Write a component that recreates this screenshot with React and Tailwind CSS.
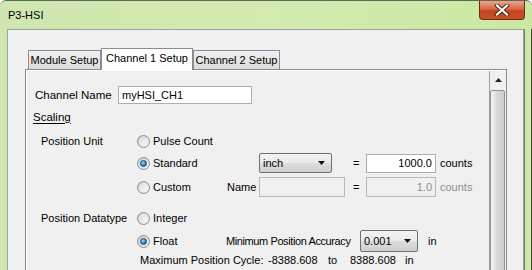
export default function App() {
  return (
    <div className="flex h-[270px] w-[532px] flex-col overflow-hidden rounded-t-[6px] border-t border-[#5b6b52] bg-gradient-to-r from-[#cfe6b0] via-[#d3ebb2] to-[#cbe8a2] font-['Liberation_Sans',sans-serif] text-[11px] leading-[13px] text-black">
      <div className="flex h-[28px] shrink-0 items-start">
        <span className="pl-[8px] pt-[8px] text-[11px]">P3-HSI</span>
        <CloseButton />
      </div>

      <div className="flex min-h-0 flex-1">
        <div className="w-[7px] shrink-0" />
        <div className="flex-1 border-l border-r border-t border-[#9aa596] bg-[#f0f0f0] pl-[17px] pt-[18px]">
          <div className="flex h-[21px] items-end pl-[3px]">
            <Tab label="Module Setup" className="w-[73px]" />
            <div className="relative z-10 -mb-px flex h-[22px] w-[92px] items-center justify-center border-l border-r border-t border-[#898c95] bg-white pb-[2px]">
              Channel 1 Setup
            </div>
            <Tab label="Channel 2 Setup" className="w-[87px]" />
          </div>

          <div className="h-[220px] w-[482px] border border-[#898c95]">
            <div className="flex h-full border-l border-t border-white">
              <div className="flex-1 whitespace-nowrap pl-[8px] pt-[15px]">
                <div className="flex h-[18px] items-center">
                  <span className="w-[83px] text-[11.5px]">Channel Name</span>
                  <div className="flex h-[18px] w-[134px] items-center border border-[#abadb3] bg-white pl-[3px]">
                    myHSI_CH1
                  </div>
                </div>

                <div className="-ml-[2px] mt-[6px] flex h-[14px] items-center">
                  <span className="text-[11.5px] underline underline-offset-2">Scaling</span>
                </div>

                <div className="mt-[7px] flex h-[20px] items-center">
                  <span className="ml-[6px] w-[96px]">Position Unit</span>
                  <RadioLabel label="Pulse Count" />
                </div>

                <div className="mt-[2px] flex h-[20px] items-center">
                  <span className="ml-[6px] w-[96px]" />
                  <RadioLabel label="Standard" on className="w-[122px]" />
                  <Combo value="inch" className="h-[20px] w-[73px]" />
                  <span className="ml-[21px] w-[13px]">=</span>
                  <div className="flex h-[19px] w-[70px] items-center justify-end border border-[#abadb3] bg-white pr-[3px]">
                    1000.0
                  </div>
                  <span className="ml-[4px]">counts</span>
                </div>

                <div className="mt-[4px] flex h-[20px] items-center">
                  <span className="ml-[6px] w-[96px]" />
                  <RadioLabel label="Custom" className="w-[90px]" />
                  <span className="w-[32px]">Name</span>
                  <div className="h-[20px] w-[86px] border border-[#b5b8bd] bg-[#f0f0f0]" />
                  <span className="ml-[8px] w-[13px]">=</span>
                  <div className="flex h-[20px] w-[70px] items-center justify-end border border-[#b5b8bd] bg-[#f0f0f0] pr-[3px] text-[#8d8d8d]">
                    1.0
                  </div>
                  <span className="ml-[4px] text-[#8d8d8d]">counts</span>
                </div>

                <div className="mt-[11px] flex h-[20px] items-center">
                  <span className="ml-[6px] w-[96px]">Position Datatype</span>
                  <RadioLabel label="Integer" />
                </div>

                <div className="mt-[2px] flex h-[22px] items-center">
                  <span className="ml-[6px] w-[96px]" />
                  <RadioLabel label="Float" on className="w-[89px]" />
                  <span className="w-[134px] tracking-[-0.4px]">Minimum Position Accuracy</span>
                  <Combo value="0.001" className="h-[22px] w-[58px]" />
                  <span className="ml-[10px]">in</span>
                </div>

                <div className="flex h-[16px] items-center">
                  <span className="ml-[105px] w-[128px]">Maximum Position Cycle:</span>
                  <span className="w-[60px]">-8388.608</span>
                  <span className="w-[22px]">to</span>
                  <span className="w-[55px]">8388.608</span>
                  <span>in</span>
                </div>
              </div>

              <ScrollBar />
            </div>
          </div>
        </div>
        <div className="w-[8px] shrink-0 border-l border-[#6f7f60] border-r border-r-[#3f4a36] bg-gradient-to-r from-[#c9e6a0] to-[#d2ecb0]" />
      </div>
    </div>
  );
}

function Tab({ label, className = "" }) {
  return (
    <div
      className={`flex h-[19px] items-center justify-center border-l border-r border-t border-[#898c95] bg-gradient-to-b from-[#f0f0f0] to-[#dcdcdc] ${className}`}
    >
      {label}
    </div>
  );
}

function Radio({ on }) {
  return (
    <span className="flex h-[13px] w-[13px] shrink-0 items-center justify-center rounded-full border border-[#8e8f8f] bg-gradient-to-br from-[#c9c9c9] to-[#f6f6f6]">
      {on ? (
        <span className="h-[7px] w-[7px] rounded-full border border-[#1b4f7d] bg-[radial-gradient(circle_at_40%_35%,#9fdcff,#2a86cc_55%,#0d4a85)]" />
      ) : (
        <span className="h-[9px] w-[9px] rounded-full bg-gradient-to-br from-[#dcdcdc] to-[#fafafa]" />
      )}
    </span>
  );
}

function RadioLabel({ label, on = false, className = "" }) {
  return (
    <div className={`flex shrink-0 items-center gap-[3px] ${className}`}>
      <Radio on={on} />
      <span>{label}</span>
    </div>
  );
}

function Combo({ value, className = "" }) {
  return (
    <div
      className={`flex shrink-0 items-center rounded-[2px] border border-[#707070] bg-[linear-gradient(#f3f3f3_0%,#ebebeb_48%,#dddddd_52%,#cfcfcf_100%)] pl-[3px] pr-[6px] ${className}`}
    >
      <span className="flex-1">{value}</span>
      <svg width="7" height="4" viewBox="0 0 7 4" aria-hidden="true">
        <path d="M0 0h7L3.5 4z" fill="#111" />
      </svg>
    </div>
  );
}

function ScrollBar() {
  return (
    <div className="flex w-[17px] shrink-0 flex-col border-l border-[#a0a0a0] bg-[#f0f0f0]">
      <div className="flex h-[19px] items-center justify-center">
        <svg width="7" height="4" viewBox="0 0 7 4" aria-hidden="true">
          <path d="M0 4h7L3.5 0z" fill="#222" />
        </svg>
      </div>
      <div className="h-[200px] w-[15px] rounded-t-[2px] border border-[#8f919c] bg-gradient-to-r from-[#f4f4f4] via-[#d8d8d8] to-[#cfcfcf]" />
    </div>
  );
}

function CloseButton() {
  return (
    <div className="ml-auto mr-[7px] flex h-[19px] w-[46px] items-center justify-center rounded-b-[4px] border border-t-0 border-[#6e2a18] bg-[linear-gradient(#e9a48c_0%,#d8684a_45%,#c4431f_55%,#c9512c_100%)]">
      <svg width="16" height="12" viewBox="0 0 16 12" aria-hidden="true">
        <path
          d="M3 1.5l5 4.5 5-4.5M3 10.5l5-4.5 5 4.5"
          fill="none"
          stroke="#4a1c10"
          strokeWidth="4"
          strokeLinecap="square"
        />
        <path
          d="M3 1.5l5 4.5 5-4.5M3 10.5l5-4.5 5 4.5"
          fill="none"
          stroke="#fff"
          strokeWidth="2.2"
          strokeLinecap="square"
        />
      </svg>
    </div>
  );
}
